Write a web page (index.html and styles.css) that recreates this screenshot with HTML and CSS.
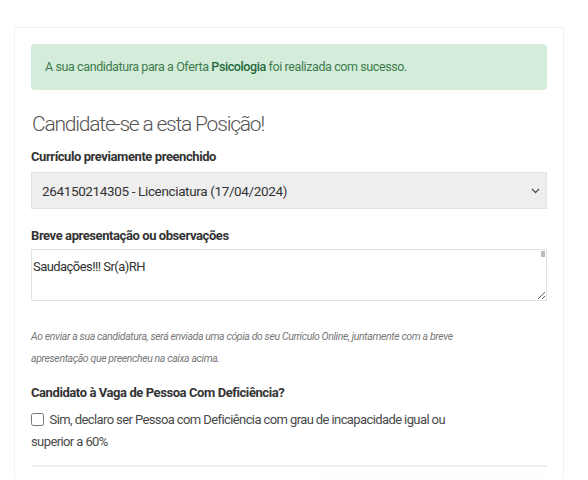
FILE: index.html
```html
<!DOCTYPE html>
<html lang="pt">
<head>
    <meta charset="UTF-8">
    <title>Candidatura</title>
    <link rel="stylesheet" href="styles.css">
</head>

<body>
    <div class="panel">
        <div class="alert-success">
            A sua candidatura para a Oferta <b>Psicologia</b> foi realizada com sucesso.
        </div>

        <h2 class="title">Candidate-se a esta Posição!</h2>

        <form class="apply-form">
            <div class="form-group">
                <label class="control-label" for="cv">Currículo previamente preenchido</label>
                <div class="select-wrap">
                    <select id="cv" class="form-control">
                        <option>264150214305 - Licenciatura (17/04/2024)</option>
                    </select>
                    <svg class="chevron" width="9" height="6" viewBox="0 0 9 6">
                        <path d="M1 1l3.5 3.5L8 1" fill="none" stroke="#555" stroke-width="1.4"/>
                    </svg>
                </div>
            </div>

            <div class="form-group group-msg">
                <label class="control-label" for="msg">Breve apresentação ou observações</label>
                <div class="textarea-wrap">
                    <textarea id="msg" class="form-control" rows="3">Saudações!!! Sr(a)RH</textarea>
                    <span class="scroll-thumb"></span>
                </div>
            </div>

            <p class="help">Ao enviar a sua candidatura, será enviada uma cópia do seu Currículo Online, juntamente com a breve apresentação que preencheu na caixa acima.</p>

            <div class="form-group group-pcd">
                <label class="control-label">Candidato à Vaga de Pessoa Com Deficiência?</label>
                <label class="checkbox">
                    <input type="checkbox" id="pcd"> Sim, declaro ser Pessoa com Deficiência com grau de incapacidade igual ou superior a 60%
                </label>
            </div>

            <hr>

            <div class="actions"></div>
        </form>
    </div>
</body>
</html>
```

FILE: styles.css
```css
body {
    margin: 0;
    font-family: Roboto, 'Liberation Sans', sans-serif;
    color: #333;
    background: #fff;
}

.panel {
    width: 516px;
    margin: 27px 0 0 14px;
    padding: 16px 16px 0;
    border: 1px solid #f2f2f2;
    border-bottom: none;
}

.alert-success {
    background-color: #d4edda;
    border-radius: 4px;
    color: #3d7a4d;
    font-size: 12.5px;
    letter-spacing: -0.4px;
    padding: 15px 14px;
    line-height: 16px;
}

.alert-success b {
    color: #22683a;
    font-weight: 500;
}

.title {
    font-size: 21px;
    line-height: 26px;
    font-weight: 300;
    color: #555;
    margin: 21px 0 12px 1px;
    letter-spacing: -1.2px;
}

.control-label {
    display: block;
    font-size: 13px;
    line-height: 16px;
    font-weight: bold;
    color: #333;
    margin-bottom: 7px;
    letter-spacing: -0.42px;
}

.form-control {
    display: block;
    width: 100%;
    box-sizing: border-box;
    font-family: inherit;
    color: #333;
    border: 1px solid #e2e2e2;
    border-radius: 0;
    outline: none;
}

.select-wrap,
.textarea-wrap {
    position: relative;
}

select.form-control {
    appearance: none;
    -webkit-appearance: none;
    height: 37px;
    background: #eee;
    padding: 0 10px;
    font-size: 13.5px;
    letter-spacing: -0.36px;
}

.chevron {
    position: absolute;
    right: 7px;
    top: 16px;
}

.group-msg {
    margin-top: 19px;
}

.group-msg .control-label {
    margin-bottom: 5px;
}

textarea.form-control {
    height: 52px;
    padding: 9px 1px;
    resize: vertical;
    font-size: 13px;
    letter-spacing: -0.55px;
}

.scroll-thumb {
    position: absolute;
    right: 2px;
    top: 2px;
    width: 4px;
    height: 6px;
    background: #bbb;
}

.help {
    font-size: 10.5px;
    font-style: italic;
    color: #777;
    line-height: 22px;
    margin: 25px 0 0;
    max-width: 440px;
    letter-spacing: -0.38px;
}

.group-pcd {
    margin-top: 15px;
}

.group-pcd .control-label {
    margin-bottom: 8px;
}

.checkbox {
    display: block;
    max-width: 440px;
    font-size: 13px;
    line-height: 22px;
    color: #4a4a4a;
    letter-spacing: -0.6px;
}

.checkbox input {
    margin: 0 3px 0 0;
    width: 13px;
    height: 13px;
    vertical-align: -2px;
}

hr {
    border: none;
    border-top: 2px solid #f0f0f0;
    margin: 12px 0 0;
}

.actions {
    width: 236px;
    height: 2px;
    margin: 10px -3px 0 auto;
    border-radius: 6px 6px 0 0;
    box-shadow: 0 0 16px rgba(0, 0, 0, 0.07);
}
```
